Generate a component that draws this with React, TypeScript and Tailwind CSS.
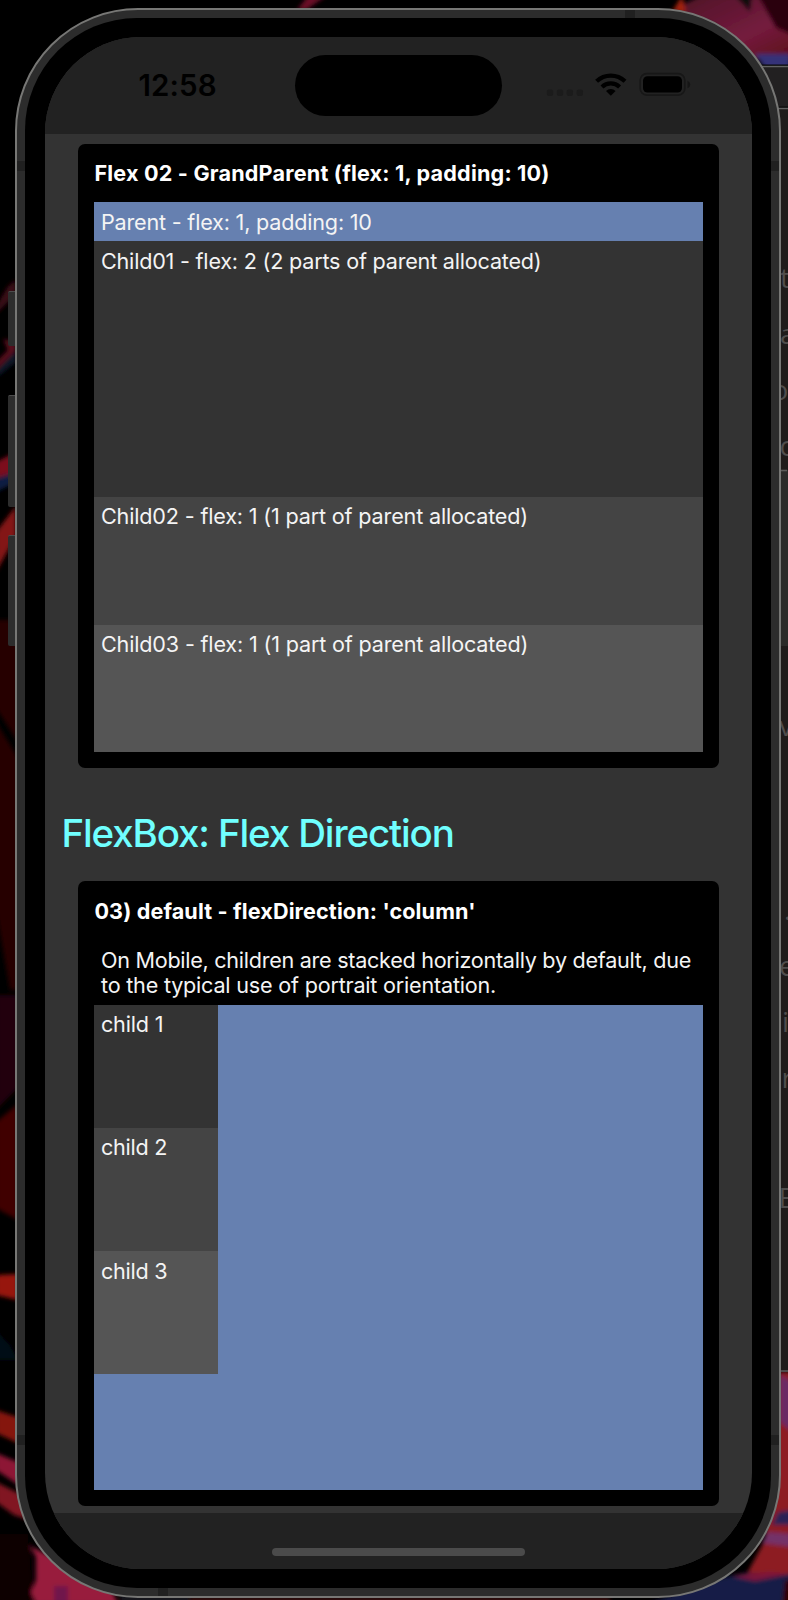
import React from "react";

const bodyText = "whitespace-nowrap text-[21.6px] leading-[25.4px] text-[#f4f4f4]";

function Wallpaper() {
  return (
    <svg className="absolute inset-0" width="788" height="1600" viewBox="0 0 788 1600">
      <defs>
        <filter id="soft" x="-20%" y="-20%" width="140%" height="140%">
          <feGaussianBlur stdDeviation="2.2" />
        </filter>
        <linearGradient id="plum" x1="0" y1="0" x2="1" y2="1">
          <stop offset="0" stopColor="#4d1525" />
          <stop offset="0.6" stopColor="#741b3e" />
          <stop offset="1" stopColor="#5a0c14" />
        </linearGradient>
      </defs>
      <rect width="788" height="1600" fill="#000" />
      <g filter="url(#soft)">
        <path d="M297 10 L308 -4 H326 L306 10Z" fill="#6c1026" />
        <path d="M672 10 L700 -4 H800 V60 H754 L715 25Z" fill="url(#plum)" />
        <path d="M672 12 L682 -4 L686 12Z" fill="#a32109" />
        <path d="M735 -4 H752 L750 12Z" fill="#0d0710" />
        <path d="M758 -4 H800 V38 L776 28Z" fill="#2c0508" />
        <path d="M755 54 H790 V70 H766Z" fill="#363078" />
        <path d="M-4 306 L8 286 L16 280 V294 L-4 314Z" fill="#3a0712" />
        <path d="M-4 370 L16 349 V362 L-4 378Z" fill="#0c1826" />
        <path d="M-4 362 L8 350 L3 339 L8 340 L16 344 V350 L-4 370Z" fill="#5a0d1a" />
        <path d="M-4 462 L16 452 V478 L-4 482Z" fill="#7b111f" />
        <path d="M-4 478 L16 472 V482 L-4 492Z" fill="#101b42" />
        <path d="M-4 532 L16 506 V536 L-4 572Z" fill="#831516" />
        <path d="M-4 620 H18 V742 L-4 708Z" fill="#250102" />
        <path d="M-4 722 L18 758 V990 H10 L-4 910Z" fill="#280303" />
        <path d="M-4 995 H18 V1088 L-4 1110Z" fill="#20020b" />
        <path d="M-4 1122 L18 1104 V1220 L-4 1208Z" fill="#410605" />
        <path d="M-4 1275 L18 1274 V1300 L-4 1295Z" fill="#97170f" />
        <path d="M-4 1330 L10 1345 L18 1360 H-4Z" fill="#030817" />
        <path d="M-4 1410 L20 1418 V1444 L-4 1433Z" fill="#851411" />
        <path d="M-4 1453 L20 1463 V1486 L-4 1470Z" fill="#8d1736" />
        <path d="M-4 1482 L22 1495 L30 1520 L14 1515 L-4 1502Z" fill="#811820" />
        <path d="M-4 1534 H28 L34 1610 H-4Z" fill="#080000" />
        <path d="M30 1546 L38 1550 L110 1586 L118 1604 H36 L31 1592 L36 1580 V1557Z" fill="#981c3c" />
        <path d="M54 1586 H68 V1604 H54Z" fill="#6f184c" />
        <path d="M120 1594 H190 V1604 H120Z" fill="#15171e" />
        <path d="M190 1597 H610 V1604 H190Z" fill="#360b0b" />
        <path d="M778 1372 H792 V1605 H730 L765 1540Z" fill="#8d1a22" />
        <path d="M780 1375 L792 1382 V1432 L780 1422Z" fill="#6b2b64" />
        <path d="M778 1512 L792 1510 V1525 H772Z" fill="#2a2255" />
        <path d="M768 1532 L792 1534 V1547 L762 1543Z" fill="#733067" />
        <path d="M720 1578 L745 1573 L792 1574 V1605 H645Z" fill="#171b47" />
        <path d="M732 1576 L770 1572 L790 1574 L755 1581Z" fill="#7b183b" />
        <path d="M785 1580 H792 V1605 H782Z" fill="#320406" />
      </g>
      <rect x="740" y="65" width="48" height="1307" fill="#1f1b1a" />
      <rect x="740" y="65" width="48" height="43" fill="#222021" />
      <path d="M740 66.5H788M740 108.5H788" stroke="#626262" strokeWidth="1.3" />
      <path d="M740 65H788M740 107H788" stroke="#080808" />
      <rect x="778" y="1370" width="10" height="2" fill="#4d4b4b" />
      <path d="M778 470H788V646H778Z" fill="#2b2a28" />
      <path d="M781 470.500H787" stroke="#5c5b59" strokeWidth="1.6" />
      <g fill="#504d4c" fontFamily="Open Sans, sans-serif" fontSize="28">
        <text x="780" y="287.500">t</text>
        <text x="780" y="344">a</text>
        <text x="771.500" y="399.500">o</text>
        <text x="779.500" y="456">c</text>
        <text x="779" y="736">v</text>
        <text x="784" y="920">.</text>
        <text x="779" y="975.500">e</text>
        <text x="782" y="1032">i</text>
        <text x="781.500" y="1088">r</text>
        <text x="778.500" y="1208">E</text>
      </g>
    </svg>
  );
}

function SideButton({ place }: { place: string }) {
  return (
    <div className={`absolute left-[7.5px] w-[9px] rounded-l-[2px] border-t-[1.5px] border-t-[#4c4c4c] bg-[#2d2d2d] ${place}`} />
  );
}

function StatusBar() {
  return (
    <header className="flex h-[97px] shrink-0 items-start bg-[#222] pt-[18px]">
      <div className="flex h-[61px] w-[250px] items-center pl-[93.500px]">
        <span className="whitespace-nowrap text-[29.500px] font-semibold leading-none text-black tracking-[0.1px]">12:58</span>
      </div>
      <div className="h-[61px] w-[207px] rounded-full bg-black" />
      <svg width="250" height="61" viewBox="502 55 250 61">
        <g fill="#1b1b1b">
          <rect x="546.800" y="89.500" width="6.400" height="6.400" rx="2" />
          <rect x="556.800" y="89.500" width="6.400" height="6.400" rx="2" />
          <rect x="566.600" y="89.500" width="6.400" height="6.400" rx="2" />
          <rect x="576.600" y="89.500" width="6.400" height="6.400" rx="2" />
        </g>
        <g fill="none" stroke="#000" strokeWidth="4.200">
          <path d="M596.600 81.300 A20.500 20.500 0 0 1 625 81.300" />
          <path d="M602 87 A12.600 12.600 0 0 1 619.600 87" />
        </g>
        <path d="M610.800 95.800 L606 91 A7 7 0 0 1 615.600 91 Z" fill="#000" />
        <rect x="640.200" y="73.700" width="44.600" height="21.400" rx="6.500" fill="none" stroke="#171717" strokeWidth="1.700" />
        <rect x="643" y="76.300" width="39" height="16.200" rx="4.500" fill="#000" />
        <path d="M687.500 80.800 Q690.200 82 690.200 84.500 Q690.200 87 687.500 88.200Z" fill="#151515" />
      </svg>
    </header>
  );
}

function Card({ title, tracking, children }: { title: string; tracking: string; children: React.ReactNode }) {
  return (
    <section className="ml-[33px] flex h-[624.300px] w-[641px] shrink-0 flex-col rounded-[7px] bg-black px-[16.400px] pb-[16px] pt-[16px]">
      <h2 className={`h-[42px] whitespace-nowrap pt-[0.300px] text-[21.6px] font-bold leading-[26px] text-white ${tracking}`}>{title}</h2>
      {children}
    </section>
  );
}

export default function App() {
  return (
    <main className="relative h-[1600px] w-[788px] overflow-hidden bg-black pl-[15px] pt-[8px] font-['Inter',sans-serif]">
      <Wallpaper />
      <SideButton place="top-[290.500px] h-[55px]" />
      <SideButton place="top-[394.500px] h-[112px]" />
      <SideButton place="top-[534.500px] h-[111.500px]" />
      <div className="relative h-[1590px] w-[766px] overflow-hidden rounded-[123px] border-2 border-[#777775] bg-[#2c2c2c] p-[8px]">
        <i className="absolute left-0 top-[151px] h-[10px] w-[9px] bg-[#202020]" />
        <i className="absolute right-0 top-[151px] h-[10px] w-[9px] bg-[#202020]" />
        <i className="absolute left-0 top-[1425px] h-[10px] w-[9px] bg-[#202020]" />
        <i className="absolute right-0 top-[1425px] h-[10px] w-[9px] bg-[#202020]" />
        <i className="absolute left-[608px] top-0 h-[9px] w-[10px] bg-[#202020]" />
        <i className="absolute bottom-0 left-[141px] h-[9px] w-[10px] bg-[#202020]" />
        <div className="relative h-[1570px] w-[746px] rounded-[112px] bg-black pb-[19px] pl-[20px] pr-[19px] pt-[19px]">
          <div className="flex h-[1532px] w-[707px] flex-col overflow-hidden rounded-[96px] bg-[#333]">
            <StatusBar />
            <div className="flex min-h-0 flex-1 flex-col pt-[10px]">
              <Card title="Flex 02 - GrandParent (flex: 1, padding: 10)" tracking="tracking-[0.190px]">
                <div className="flex flex-1 flex-col bg-[#6680b0]">
                  <p className={`h-[39.200px] px-[6.600px] pt-[8px] tracking-[-0.200px] ${bodyText}`}>Parent - flex: 1, padding: 10</p>
                  <div className="min-h-0 flex-[2_2_0%] bg-[#333]">
                    <p className={`px-[6.600px] pt-[7.500px] tracking-[-0.210px] ${bodyText}`}>Child01 - flex: 2 (2 parts of parent allocated)</p>
                  </div>
                  <div className="min-h-0 flex-[1_1_0%] bg-[#444]">
                    <p className={`px-[6.600px] pt-[7.500px] tracking-[-0.170px] ${bodyText}`}>Child02 - flex: 1 (1 part of parent allocated)</p>
                  </div>
                  <div className="min-h-0 flex-[1_1_0%] bg-[#555]">
                    <p className={`px-[6.600px] pt-[7.500px] tracking-[-0.170px] ${bodyText}`}>Child03 - flex: 1 (1 part of parent allocated)</p>
                  </div>
                </div>
              </Card>
              <h1 className="flex h-[113px] shrink-0 items-center whitespace-nowrap pl-[16.400px] pt-[17.500px] text-[38.500px] font-medium leading-none tracking-[-1.130px] text-[#70ffff]">
                FlexBox: Flex Direction
              </h1>
              <Card title="03) default - flexDirection: 'column'" tracking="tracking-[0.130px]">
                <p className={`h-[65.600px] px-[6.600px] pt-[8.500px] ${bodyText}`}>
                  <span className="tracking-[-0.280px]">On Mobile, children are stacked horizontally by default, due</span>
                  <br />
                  <span className="tracking-[-0.210px]">to the typical use of portrait orientation.</span>
                </p>
                <div className="flex flex-1 flex-col bg-[#6680b0]">
                  <div className={`h-[123.200px] w-[123.300px] bg-[#333] px-[6.600px] pt-[7.300px] tracking-[-0.200px] ${bodyText}`}>child 1</div>
                  <div className={`h-[123.200px] w-[123.300px] bg-[#444] px-[6.600px] pt-[7px] tracking-[-0.270px] ${bodyText}`}>child 2</div>
                  <div className={`h-[123.200px] w-[123.300px] bg-[#555] px-[6.600px] pt-[7.300px] tracking-[-0.270px] ${bodyText}`}>child 3</div>
                </div>
              </Card>
            </div>
            <footer className="flex h-[56.300px] shrink-0 items-start justify-center bg-[#222] pt-[35px]">
              <div className="h-[8px] w-[253px] rounded-full bg-[#4b4b4b]" />
            </footer>
          </div>
        </div>
      </div>
    </main>
  );
}
